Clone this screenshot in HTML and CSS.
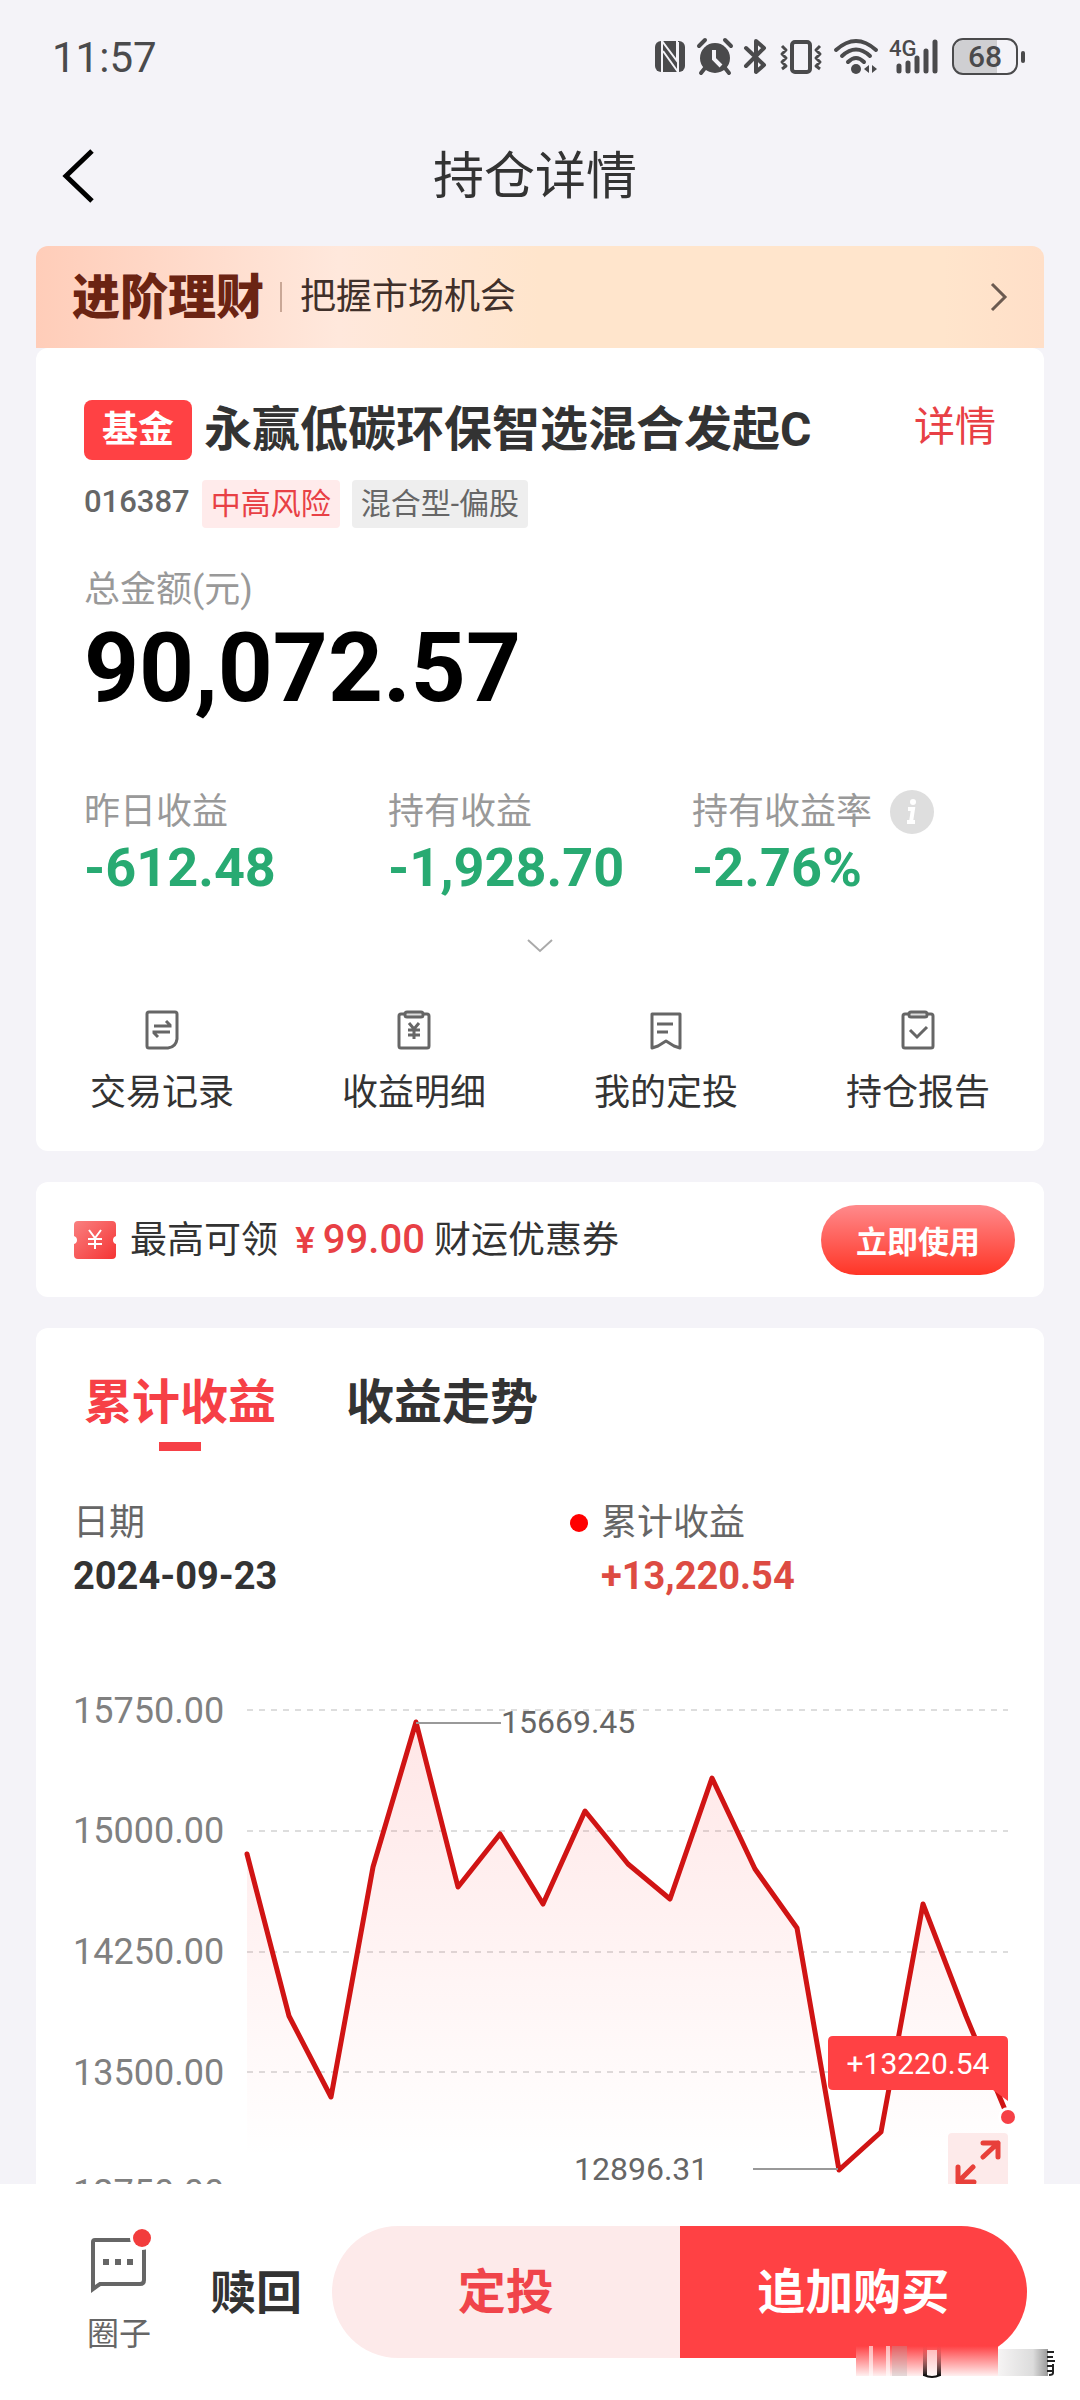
FILE: index.html
```html
<!DOCTYPE html>
<html lang="zh-CN">

<head>
    <meta charset="UTF-8">
    <meta name="viewport" content="width=device-width, initial-scale=1.0">
    <title>持仓详情</title>
    <link rel="stylesheet" href="styles.css">
</head>

<body>
    <!-- Status bar -->
    <div class="status-bar">
        <span class="clock">11:57</span>
        <div class="status-icons">
            <svg width="32" height="38" viewBox="0 0 32 38">
                <rect x="1" y="3" width="30" height="31" rx="6" fill="#4a4a4c" />
                <path d="M8 34V3l15 20V3M9 13l15 21V4" fill="none" stroke="#f4f3f8" stroke-width="2" />
            </svg>
            <svg width="36" height="38" viewBox="0 0 36 38">
                <circle cx="18" cy="20" r="15" fill="#4a4a4c" />
                <path d="M2 8l6-6M34 8l-6-6M8 30l-4 5M28 30l4 5" stroke="#4a4a4c" stroke-width="4" stroke-linecap="round" />
                <path d="M17 12v9l7 7" fill="none" stroke="#f4f3f8" stroke-width="4" />
            </svg>
            <svg width="24" height="38" viewBox="0 0 24 38">
                <path d="M2 10l18 17-8 7V3l8 7L2 28" fill="none" stroke="#4a4a4c" stroke-width="4" stroke-linejoin="round" stroke-linecap="round" />
            </svg>
            <svg width="44" height="38" viewBox="0 0 44 38">
                <rect x="13" y="4" width="18" height="30" rx="3" fill="none" stroke="#4a4a4c" stroke-width="4" />
                <path d="M3 8l4 4-4 4 4 4-4 4 4 4-4 3M41 8l-4 4 4 4-4 4 4 4-4 4 4 3" fill="none" stroke="#4a4a4c" stroke-width="3" stroke-linejoin="round" />
            </svg>
            <svg width="44" height="38" viewBox="0 0 44 38">
                <path d="M2 12Q22-6 42 12M8 18q14-13 28 0M14 24q8-8 16 0" fill="none" stroke="#4a4a4c" stroke-width="4" stroke-linecap="round" />
                <circle cx="22" cy="31" r="5" fill="#4a4a4c" />
                <path d="M35 27v8l-5-4zM38 27v8l5-4z" fill="#4a4a4c" />
            </svg>
            <svg width="52" height="38" viewBox="0 0 52 38">
                <text x="0" y="18" class="net-label">4G</text>
                <path d="M10 28v5M19 25v8M28 20v13M37 13v20M46 4v29" stroke="#4a4a4c" stroke-width="5" stroke-linecap="round" />
            </svg>
            <svg width="74" height="38" viewBox="0 0 74 38">
                <rect x="2" y="2" width="63" height="34" rx="10" fill="#f4f3f8" />
                <path d="M45 2v34H12A10 10 0 0 1 2 26V12A10 10 0 0 1 12 2z" fill="#cfcfd2" />
                <rect x="1" y="1" width="64" height="35" rx="10" fill="none" stroke="#4a4a4c" stroke-width="2" />
                <rect x="69" y="13" width="4" height="12" rx="2" fill="#4a4a4c" />
                <text x="33" y="29" text-anchor="middle" class="battery-label">68</text>
            </svg>
        </div>
    </div>

    <header class="nav-bar">
        <button class="icon-btn" aria-label="返回">
            <svg width="36" height="56" viewBox="0 0 36 56">
                <path d="M32 3L6 28l26 25" fill="none" stroke="#000" stroke-width="5" />
            </svg>
        </button>
        <h1>持仓详情</h1>
    </header>

    <main>
        <a href="#" class="banner">
            <strong>进阶理财</strong>
            <span class="banner-text">把握市场机会</span>
            <svg width="18" height="30" viewBox="0 0 18 30">
                <path d="M2 2l13 13L2 28" fill="none" stroke="#6b5a50" stroke-width="3" />
            </svg>
        </a>

        <!-- Holding summary -->
        <section class="card summary">
            <div class="fund-title">
                <span class="badge">基金</span>
                <h2>永赢低碳环保智选混合发起C</h2>
                <a href="#">详情</a>
            </div>
            <div class="tags">
                <span class="code">016387</span>
                <span class="tag risk">中高风险</span>
                <span class="tag">混合型-偏股</span>
            </div>
            <p class="total-label">总金额(元)</p>
            <p class="total">90,072.57</p>
            <div class="stats">
                <div>
                    <p class="label">昨日收益</p>
                    <p class="value">-612.48</p>
                </div>
                <div>
                    <p class="label">持有收益</p>
                    <p class="value">-1,928.70</p>
                </div>
                <div>
                    <p class="label">持有收益率
                        <svg width="44" height="44" viewBox="0 0 44 44">
                            <circle cx="22" cy="22" r="22" fill="#dedede" />
                            <circle cx="23" cy="12" r="3" fill="#fff" />
                            <path d="M18 19h5l-2 13M17 32h8" fill="none" stroke="#fff" stroke-width="4" />
                        </svg>
                    </p>
                    <p class="value">-2.76%</p>
                </div>
            </div>
            <button class="expand-more" aria-label="展开">
                <svg width="26" height="14" viewBox="0 0 26 14">
                    <path d="M1 1l12 11L25 1" fill="none" stroke="#aaa" stroke-width="2" />
                </svg>
            </button>
            <nav class="actions">
                <a href="#">
                    <svg width="34" height="42" viewBox="0 0 34 42">
                        <path d="M4 3h26q2 0 2 2v25q-1 8-9 9H4q-2 0-2-2V5q0-2 2-2z" fill="none" stroke="#666" stroke-width="3" />
                        <path d="M9 17h16v-1l-4-4M25 23H9v1l4 4" fill="none" stroke="#666" stroke-width="3" />
                    </svg>
                    交易记录
                </a>
                <a href="#">
                    <svg width="34" height="42" viewBox="0 0 34 42">
                        <rect x="2" y="5" width="30" height="34" rx="2" fill="none" stroke="#666" stroke-width="3" />
                        <rect x="8" y="3" width="18" height="5" rx="2" fill="#ddd" stroke="#666" stroke-width="3" />
                        <path d="M12 14l5 6 5-6M17 20v10M11 21h12M11 26h12" fill="none" stroke="#666" stroke-width="3" />
                    </svg>
                    收益明细
                </a>
                <a href="#">
                    <svg width="34" height="42" viewBox="0 0 34 42">
                        <path d="M3 5h28v34l-6-2-8-5-8 5-6 2z" fill="none" stroke="#666" stroke-width="3" stroke-linejoin="round" />
                        <path d="M8 15h16M8 23h11" stroke="#666" stroke-width="3" />
                    </svg>
                    我的定投
                </a>
                <a href="#">
                    <svg width="34" height="42" viewBox="0 0 34 42">
                        <rect x="2" y="5" width="30" height="34" rx="2" fill="none" stroke="#666" stroke-width="3" />
                        <rect x="8" y="3" width="18" height="5" rx="2" fill="#ddd" stroke="#666" stroke-width="3" />
                        <path d="M9 21l7 7 10-10" fill="none" stroke="#666" stroke-width="3" />
                    </svg>
                    持仓报告
                </a>
            </nav>
        </section>

        <!-- Coupon -->
        <section class="card coupon">
            <svg width="42" height="38" viewBox="0 0 42 38">
                <defs>
                    <linearGradient id="ticket" x1="0" y1="0" x2="1" y2="1">
                        <stop offset="0" stop-color="#f98080" />
                        <stop offset="1" stop-color="#f53434" />
                    </linearGradient>
                </defs>
                <path d="M4 0h34q4 0 4 4v11q-3 1-3 4t3 4v11q0 4-4 4H4q-4 0-4-4V23q3-1 3-4t-3-4V4q0-4 4-4z" fill="url(#ticket)" />
                <path d="M15 9l6 8 6-8M21 17v11M14 18h14M14 23h14" fill="none" stroke="#fff" stroke-width="2" />
            </svg>
            <p>最高可领 <span class="yen">¥</span><span class="amount">99.00</span> 财运优惠券</p>
            <button>立即使用</button>
        </section>

        <!-- Earnings chart -->
        <section class="card earnings">
            <div class="tabs">
                <button class="active">累计收益</button>
                <button>收益走势</button>
            </div>
            <div class="readout">
                <div>
                    <p class="label">日期</p>
                    <p class="date">2024-09-23</p>
                </div>
                <div class="series">
                    <p class="label">累计收益</p>
                    <p class="gain">+13,220.54</p>
                </div>
            </div>
            <div class="chart">
                <svg viewBox="0 0 1008 560">
                    <defs>
                        <linearGradient id="area" gradientUnits="userSpaceOnUse" x1="0" y1="60" x2="0" y2="500">
                            <stop offset="0" stop-color="#ff3030" stop-opacity="0.12" />
                            <stop offset="1" stop-color="#ff3030" stop-opacity="0" />
                        </linearGradient>
                    </defs>
                    <path class="grid-line" d="M211 51h761M211 172h761M211 293h761M211 413h761M211 534h761" />
                    <g class="axis">
                        <text x="37" y="64">15750.00</text>
                        <text x="37" y="184">15000.00</text>
                        <text x="37" y="305">14250.00</text>
                        <text x="37" y="426">13500.00</text>
                        <text x="37" y="546">12750.00</text>
                    </g>
                    <path fill="url(#area)" d="M211 195L253 357L295 438L337 208L380 63L422 228L464 175L507 245L549 152L592 205L634 240L676 119L719 210L761 269L803 511L845 473L887 245L930 357L972 458V534H211z" />
                    <polyline class="line" points="211,195 253,357 295,438 337,208 380,63 422,228 464,175 507,245 549,152 592,205 634,240 676,119 719,210 761,269 803,511 845,473 887,245 930,357 972,458" />
                    <path class="pointer" d="M380 64h85M717 510h85" />
                    <g class="mark">
                        <text x="465" y="74">15669.45</text>
                        <text x="538" y="521">12896.31</text>
                    </g>
                    <circle cx="972" cy="458" r="10" fill="#fff" />
                    <circle cx="972" cy="458" r="7" fill="#f64046" />
                    <path d="M797 377h170q5 0 5 5v60l-15-11H797q-5 0-5-5v-44q0-5 5-5z" fill="#ff4144" />
                    <text x="882" y="415" text-anchor="middle" class="tip">+13220.54</text>
                </svg>
                <button class="fullscreen" aria-label="全屏">
                    <svg width="60" height="60" viewBox="0 0 60 60">
                        <path d="M35 24L50 10M35 10h15v14M25 34L10 49M10 34v15h16" fill="none" stroke="#e8403a" stroke-width="5" stroke-linecap="round" stroke-linejoin="round" />
                    </svg>
                </button>
            </div>
        </section>
    </main>

    <footer>
        <a href="#" class="circle-link">
            <svg width="66" height="64" viewBox="0 0 66 64">
                <path d="M9 14h45q4 0 4 4v36q0 4-4 4H14l-7 5V16q0-2 2-2z" fill="none" stroke="#666" stroke-width="4" />
                <path d="M17 36h6M29 36h6M41 36h6" stroke="#666" stroke-width="6" />
                <circle cx="56" cy="12" r="12" fill="#fff" />
                <circle cx="56" cy="12" r="9" fill="#f23c3c" />
            </svg>
            圈子
        </a>
        <button class="redeem">赎回</button>
        <div class="pill">
            <button class="plan">定投</button>
            <button class="buy">追加购买</button>
        </div>
        <svg class="smudge" width="200" height="34" viewBox="0 0 200 34">
            <defs>
                <linearGradient id="fade" x1="0" y1="0" x2="0" y2="1">
                    <stop offset="0" stop-color="#ff4144" />
                    <stop offset="1" stop-color="#fff0f0" />
                </linearGradient>
                <linearGradient id="haze" x1="0" y1="0" x2="1" y2="0">
                    <stop offset="0" stop-color="#f6f4f4" />
                    <stop offset="0.7" stop-color="#dcdcdc" />
                    <stop offset="1" stop-color="#999" />
                </linearGradient>
                <linearGradient id="bar" x1="0" y1="0" x2="0" y2="1">
                    <stop offset="0" stop-color="#a03030" stop-opacity="0" />
                    <stop offset="1" stop-color="#111" />
                </linearGradient>
            </defs>
            <rect width="142" height="30" fill="url(#fade)" />
            <rect x="13" width="4" height="30" fill="#fff" opacity="0.6" />
            <rect x="30" width="4" height="30" fill="#fff" opacity="0.6" />
            <rect x="36" width="15" height="30" fill="#aaa" opacity="0.3" />
            <rect x="71" y="4" width="10" height="26" fill="#fff" opacity="0.6" />
            <rect x="67" width="4" height="30" fill="url(#bar)" />
            <rect x="81" width="4" height="30" fill="url(#bar)" />
            <path d="M68 29q8 4 16 0" fill="none" stroke="#111" stroke-width="2" />
            <rect x="142" y="3" width="50" height="27" fill="url(#haze)" />
            <path d="M191 6h7M191 11h6M191 15h8M191 20h5M191 25h5M197 18v9q0 2-4 2" fill="none" stroke="#222" stroke-width="2" />
        </svg>
    </footer>
</body>

</html>
```

FILE: styles.css
```css
* {
    box-sizing: border-box;
}

body {
    font-family: Roboto, "Noto Sans CJK SC", sans-serif;
    margin: 0;
    height: 100vh;
    display: flex;
    flex-direction: column;
    background: #f4f3f8;
    color: #333;
    font-size: 36px;
}

h1,
h2,
p {
    margin: 0;
}

a {
    color: inherit;
    text-decoration: none;
}

button {
    font-family: inherit;
    color: inherit;
    border: none;
    padding: 0;
    background: none;
    cursor: pointer;
}

svg {
    display: block;
    flex-shrink: 0;
    overflow: visible;
}

/* status bar */
.status-bar {
    display: flex;
    align-items: center;
    justify-content: space-between;
    height: 114px;
    padding: 0 54px 0 52px;
    flex-shrink: 0;
}

.clock {
    font-size: 42px;
    color: #4a4a4c;
}

.status-icons {
    display: flex;
    gap: 11px;
}

.net-label {
    font-size: 22px;
    font-weight: 500;
    fill: #4a4a4c;
}

.battery-label {
    font-size: 30px;
    font-weight: 500;
    fill: #4a4a4c;
}

/* title */
.nav-bar {
    display: grid;
    grid-template-columns: 60px 1fr 70px;
    align-items: center;
    height: 124px;
    padding: 0 60px;
    flex-shrink: 0;
}

.nav-bar h1 {
    padding-bottom: 8px;
    font-size: 51px;
    font-weight: 400;
    text-align: center;
}

main {
    flex: 1;
    min-height: 0;
    overflow: hidden;
    padding: 8px 36px 0;
}

.banner {
    display: flex;
    align-items: center;
    height: 102px;
    padding: 0 36px;
    border-radius: 12px 12px 0 0;
    background: linear-gradient(90deg, #ffcdb9, #ffe8dc 30%, #ffe5cc 50%, #ffe5cc 90%, #ffdfc8);
}

.banner strong {
    padding: 0 16px 8px 0;
    font-size: 48px;
    font-weight: 900;
    color: #6b2413;
}

.banner-text {
    flex: 1;
    line-height: 30px;
    padding-left: 18px;
    border-left: 2px solid #c9a796;
    color: #40302a;
}

.card {
    background: #fff;
    border-radius: 12px;
    margin-bottom: 31px;
}

/* summary */
.summary {
    padding-top: 52px;
}

.fund-title,
.tags {
    display: flex;
    align-items: center;
    padding: 0 48px;
}

.badge {
    padding: 0 18px;
    line-height: 60px;
    border-radius: 8px;
    background: #ff4144;
    color: #fff;
    font-weight: 700;
}

.fund-title h2 {
    flex: 1;
    padding-left: 12px;
    font-size: 48px;
    font-weight: 700;
    line-height: 60px;
}

.fund-title a {
    padding-bottom: 6px;
    font-size: 41px;
    line-height: 54px;
    color: #e84045;
}

.tags {
    gap: 12px;
    margin-top: 20px;
}

.code {
    font-size: 31px;
    font-weight: 500;
    line-height: 40px;
    padding-bottom: 4px;
    color: #666;
}

.tag {
    padding: 0 9px;
    font-size: 30px;
    line-height: 48px;
    border-radius: 4px;
    background: #eee;
    color: #666;
}

.risk {
    background: #ffebeb;
    color: #e84045;
}

.total-label {
    padding: 0 48px;
    margin-top: 40px;
    line-height: 44px;
    color: #999;
}

.total {
    padding: 0 48px;
    font-size: 96px;
    font-weight: 700;
    line-height: 112px;
    color: #000;
}

.stats {
    display: grid;
    grid-template-columns: repeat(3, 1fr);
    padding: 0 48px;
    margin-top: 64px;
}

.stats .label {
    display: flex;
    align-items: center;
    gap: 18px;
    line-height: 48px;
    color: #999;
}

.value {
    font-size: 54px;
    font-weight: 700;
    line-height: 64px;
    color: #28aa72;
}

.expand-more {
    display: block;
    margin: 39px auto 0;
}

.actions {
    display: grid;
    grid-template-columns: repeat(4, 1fr);
    padding: 56px 0 32px;
}

.actions a {
    display: flex;
    flex-direction: column;
    align-items: center;
    gap: 16px;
    line-height: 52px;
}

/* coupon */
.coupon {
    display: flex;
    align-items: center;
    gap: 14px;
    height: 115px;
    padding: 0 29px 0 38px;
}

.coupon p {
    flex: 1;
    padding-bottom: 6px;
    font-size: 37px;
}

.yen,
.amount {
    color: #e84045;
    font-weight: 500;
}

.yen {
    margin: 0 8px;
}

.amount {
    font-size: 40px;
}

.coupon button {
    width: 194px;
    height: 70px;
    border-radius: 35px;
    background: linear-gradient(#ff8a8c, #ff3526);
    color: #fff;
    font-size: 31px;
    font-weight: 700;
}

/* earnings */
.earnings {
    padding-top: 40px;
}

.tabs {
    display: flex;
    align-items: flex-start;
    gap: 70px;
    padding: 0 48px;
}

.tabs button {
    font-size: 48px;
    font-weight: 700;
    line-height: 70px;
}

.tabs .active {
    color: #f64046;
}

.tabs .active::after {
    content: "";
    display: block;
    width: 42px;
    height: 9px;
    margin: 4px auto 0;
    background: #f64046;
}

.readout {
    display: grid;
    grid-template-columns: 497px 1fr;
    padding: 0 37px;
    margin-top: 45px;
}

.readout .label {
    line-height: 54px;
    color: #666;
}

.series {
    padding-left: 31px;
}

.series .label::before {
    content: "";
    display: inline-block;
    width: 18px;
    height: 18px;
    margin: 0 13px 4px -31px;
    border-radius: 50%;
    background: #f00;
    vertical-align: middle;
}

.date,
.gain {
    font-size: 38px;
    font-weight: 700;
    line-height: 52px;
}

.gain {
    color: #dd4b42;
}

.chart {
    position: relative;
    margin-top: 57px;
}

.chart > svg {
    width: 100%;
}

.grid-line {
    fill: none;
    stroke: #ddd;
    stroke-width: 2;
    stroke-dasharray: 6 6;
}

.axis text {
    font-size: 36px;
    fill: #808080;
}

.mark text {
    font-size: 32px;
    fill: #666;
}

.line {
    fill: none;
    stroke: #d01414;
    stroke-width: 5;
    stroke-linejoin: round;
    stroke-linecap: round;
}

.pointer {
    stroke: #999;
    stroke-width: 2;
}

.tip {
    font-size: 30px;
    fill: #fff;
}

.fullscreen {
    position: absolute;
    right: 36px;
    bottom: 26px;
    background: #fdeaea;
    border-radius: 4px;
}

/* bottom bar */
footer {
    position: relative;
    display: flex;
    align-items: center;
    flex-shrink: 0;
    height: 216px;
    padding: 0 53px 0 86px;
    background: #fff;
}

.circle-link {
    display: flex;
    flex-direction: column;
    align-items: center;
    gap: 20px;
    font-size: 32px;
    line-height: 48px;
    color: #666;
}

.redeem {
    padding: 0 30px 6px 58px;
    font-size: 46px;
    font-weight: 700;
}

.pill {
    flex: 1;
    display: flex;
    height: 132px;
    border-radius: 66px;
    overflow: hidden;
}

.pill button {
    flex: 1;
    padding-bottom: 8px;
    font-size: 48px;
    font-weight: 700;
}

.plan {
    background: #fdeaea;
    color: #f0444a;
}

.pill .buy {
    background: #ff4144;
    color: #fff;
}

.smudge {
    position: absolute;
    right: 24px;
    bottom: 20px;
}
```
